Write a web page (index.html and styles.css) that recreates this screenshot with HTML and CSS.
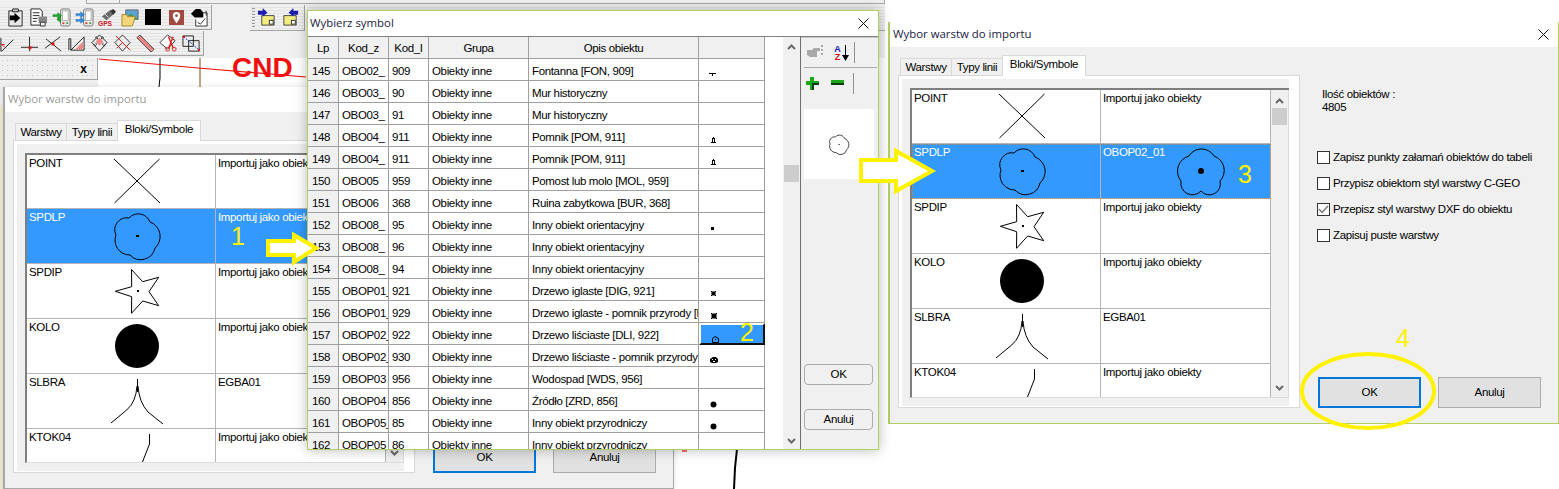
FILE: index.html
```html
<!DOCTYPE html>
<html lang="pl">
<head>
<meta charset="utf-8">
<title>Wybor warstw do importu</title>
<link rel="stylesheet" href="styles.css">
</head>
<body>
<svg class="defs" aria-hidden="true">
  <defs>
    <pattern id="dith" width="2" height="2" patternUnits="userSpaceOnUse"><rect width="2" height="2" fill="#fff"/><rect width="1" height="1" fill="#e6d800"/><rect x="1" y="1" width="1" height="1" fill="#e6d800"/></pattern>
    <pattern id="redh" width="2" height="2" patternUnits="userSpaceOnUse"><rect width="2" height="2" fill="#fff"/><rect width="1" height="1" fill="#e01010"/><rect x="1" y="1" width="1" height="1" fill="#e01010"/></pattern>
    <symbol id="s-cross" viewBox="0 0 70 54"><path d="M12 4 58 48M12.500 48 57.500 4" class="ln"/></symbol>
    <symbol id="s-flower" viewBox="0 0 70 54"><path d="M27 9A12.500 12.500 0 0 1 48 13A15.400 15.400 0 0 1 53 39A14.600 14.600 0 0 1 28 46A14.700 14.700 0 0 1 14 26A12 12 0 0 1 27 9Z" class="ln"/><rect x="34" y="26" width="3" height="2"/></symbol>
    <symbol id="s-flower2" viewBox="0 0 48 48"><path d="M12 8A14.600 14.600 0 0 1 37 8A15.300 15.300 0 0 1 43 33A11 11 0 0 1 24 43A11.600 11.600 0 0 1 4 33A15.700 15.700 0 0 1 12 8Z" class="ln"/><circle cx="24" cy="23" r="3"/></symbol>
    <symbol id="s-star" viewBox="0 0 70 54"><path d="M29.500 5.500 40.700 17.700 56.700 13.300 47 27.700 56.700 41.700 40.700 37 29.500 49.300 29.700 32.700 13.300 27.300 29.700 22.700Z" class="ln"/><rect x="35" y="26" width="2" height="2"/></symbol>
    <symbol id="s-circle" viewBox="0 0 70 54"><circle cx="35" cy="27" r="22"/></symbol>
    <symbol id="s-branch" viewBox="0 0 70 54"><path d="M35.500 5V18M35 12Q34 28 24.700 36L9 49M36 12Q37 28 46 38L61 50" class="ln"/></symbol>
    <symbol id="s-tick" viewBox="0 0 70 54"><path d="M47.500 5V15L40.500 33" class="ln"/></symbol>
    <symbol id="m-fon" viewBox="0 0 12 12"><path d="M1 5.500H8M4.500 5V8" class="ln"/></symbol>
    <symbol id="m-pom" viewBox="0 0 12 12"><path d="M3 8H8V9H3ZM4 4H5V8H4ZM6 4H7V8H6ZM5 3H6V5H5Z"/></symbol>
    <symbol id="m-dot" viewBox="0 0 12 12"><rect x="3" y="5" width="3" height="3"/></symbol>
    <symbol id="m-dig" viewBox="0 0 12 12"><path d="M3 3 8 8M8 3 3 8" class="ln"/><rect x="3.500" y="3.500" width="4" height="4"/></symbol>
    <symbol id="m-dig2" viewBox="0 0 12 12"><path d="M3 3 9 9M9 3 3 9" class="ln"/><rect x="3.500" y="3.500" width="5" height="5"/></symbol>
    <symbol id="m-dli" viewBox="0 0 12 12"><path d="M3.500 5.500 6 3.500 9.500 5.500V9.500H3.500Z" class="ln"/><rect x="6" y="6" width="1" height="1"/></symbol>
    <symbol id="m-dli2" viewBox="0 0 12 12"><path d="M2 5 5 3H8L10 5V8L8 9H4L2 8Z"/><rect x="4" y="5" width="1" height="1" fill="#fff"/><rect x="7" y="5" width="1" height="1" fill="#fff"/><rect x="5" y="7" width="2" height="1" fill="#fff"/></symbol>
    <symbol id="m-ball" viewBox="0 0 12 12"><circle cx="5.500" cy="6.500" r="3"/></symbol>
  </defs>
</svg>

<main class="screen">
  <div class="app">
    <div class="strip"><span class="strip-cell"></span><span class="strip-cell wide"></span></div>
    <div class="app-top">
      <div class="bars">
        <div class="toolbar tb-one">
          <svg class="ic" viewBox="0 0 20 20"><path d="M3 3H17V19H3Z" fill="#e8e8e8" stroke="#222"/><path d="M7 1H13V4H7Z" fill="#ccc" stroke="#222"/><path d="M4 8H9V5L15 10.500 9 16V13H4Z"/></svg>
          <svg class="ic" viewBox="0 0 20 20"><path d="M2 1H12L14 4V18H2Z" fill="#fff" stroke="#222"/><path d="M4 5H11M4 8H11M4 11H9M4 14H8" stroke="#222"/><path d="M10 9H19V16H10Z" fill="#888"/><path d="M12 15H17V19H12Z" fill="#eee" stroke="#333"/></svg>
          <svg class="ic" viewBox="0 0 20 20"><rect x="9" y="1" width="10" height="18" rx="2" fill="#e9e9e9" stroke="#777"/><rect x="11" y="3" width="6" height="10" fill="#fff" stroke="#aaa"/><path d="M11 16H13" stroke="#d33" stroke-width="2"/><path d="M15 16H17" stroke="#3a3" stroke-width="2"/><path d="M1 7H6V5L10 8 6 11V9H1ZM9 11V9L5 12 9 15V13H9Z" fill="#1dab2c" stroke="#0b7a18" stroke-width=".5"/></svg>
          <svg class="ic" viewBox="0 0 20 20"><rect x="9" y="1" width="10" height="18" rx="2" fill="#e9e9e9" stroke="#777"/><rect x="11" y="3" width="6" height="10" fill="#fff" stroke="#aaa"/><path d="M11 16H13" stroke="#d33" stroke-width="2"/><path d="M15 16H17" stroke="#3a3" stroke-width="2"/><path d="M1 6H6V4L10 7 6 10V8H1ZM1 12H6V10L10 13 6 16V14H1Z" fill="#2f8fe0" stroke="#1769b0" stroke-width=".5"/></svg>
          <svg class="ic" viewBox="0 0 20 20"><path d="M4 9 13 2 17 6 9 13Z" fill="#6b6b6b"/><path d="M13 3 16 1 19 4 16 7Z" fill="#333"/><path d="M7 6 11 10" stroke="#ddd"/><text x="0" y="19" class="gps">GPS</text></svg>
          <svg class="ic" viewBox="0 0 20 20"><path d="M5 2H18V12H5Z" fill="#5aa2d0" stroke="#667"/><path d="M5 10 10 6 18 11V12H5Z" fill="#4f9a4a"/><path d="M1 7H6L7 9H15L12 19H1Z" fill="#f1d67c" stroke="#a88a2c"/></svg>
          <span class="sq-black"></span>
          <span class="sq-pin"><svg class="pin" viewBox="0 0 16 16"><path d="M8 2A4 4 0 0 1 12 6C12 9 8 14 8 14C8 14 4 9 4 6A4 4 0 0 1 8 2Z" fill="#fff"/><circle cx="8" cy="6" r="1.500" fill="#a04a40"/></svg></span>
          <svg class="ic" viewBox="0 0 20 20"><path d="M9 5H18V19H6V12" fill="#fff" stroke="#333"/><path d="M1 6 6 1H11L14 5V10H5Z"/><path d="M8 15 11 17 16 11" fill="none" stroke="#333"/><path d="M17 3V8" stroke="#333"/></svg>
        </div>
        <div class="toolbar tb-two">
          <svg class="ic" viewBox="0 0 20 20"><path d="M2 4V18H3L15 6" fill="none" stroke="#222"/><path d="M2 11H6M6 14 3 11" fill="none" stroke="#e01010"/></svg>
          <svg class="ic" viewBox="0 0 20 20"><path d="M0 14H18M9 3V18" fill="none" stroke="#222"/><rect x="8" y="13" width="3" height="3" fill="#e01010"/></svg>
          <svg class="ic" viewBox="0 0 20 20"><path d="M2 5 18 18M17 3 1 15" fill="none" stroke="#222"/><rect x="8" y="9" width="3" height="3" fill="#e01010"/></svg>
          <svg class="ic" viewBox="0 0 20 20"><path d="M2 17V5H4L4 17H18V3L4 17" fill="none" stroke="#222"/><path d="M9 16 17 8V16Z" fill="url(#redh)"/></svg>
          <svg class="ic" viewBox="0 0 20 20"><path d="M10 1 18 9 10 18 2 9Z" fill="none" stroke="#222"/><path d="M6 3 16 13M14 3 4 13" fill="none" stroke="#333" stroke-width="2" stroke-dasharray="1 1"/><path d="M6 8 10 12 14 8 10 4Z" fill="url(#redh)"/></svg>
          <svg class="ic" viewBox="0 0 20 20"><path d="M10 1 18 9 10 18 2 9Z" fill="none" stroke="#333"/><path d="M3 2 18 17M10 9 4 15" fill="none" stroke="#e01010"/></svg>
          <svg class="ic" viewBox="0 0 20 20"><path d="M1 4 4 1 19 16 16 19Z" fill="url(#redh)" stroke="#444"/></svg>
          <svg class="ic" viewBox="0 0 20 20"><path d="M9 1 17 7 9 16 1 9Z" fill="#fff" stroke="#333"/><path d="M10 3 15 15M15 3 10 15" stroke="#d22" stroke-width="1.500"/><circle cx="9" cy="16" r="2" fill="none" stroke="#d22"/><circle cx="16" cy="16" r="2" fill="none" stroke="#d22"/></svg>
          <svg class="ic" viewBox="0 0 20 20"><path d="M1 2H12V13H1ZM7 7H18V18H7Z" fill="none" stroke="#222"/><path d="M2 3 18 17" stroke="#1a2bd8" stroke-dasharray="2 1"/><rect x="1" y="2" width="2" height="2" fill="#e01010"/><rect x="17" y="16" width="2" height="2" fill="#e01010"/></svg>
        </div>
      </div>
      <div class="toolbar tb-three">
        <span class="grip"></span>
        <svg class="ic" viewBox="0 0 20 20"><path d="M5 8H18V18H5Z" fill="url(#dith)" stroke="#444"/><path d="M1 3H6V0L11 5 6 9V7H1Z" fill="#1b1bb0"/><rect x="13" y="13" width="4" height="4" fill="#fff" stroke="#333"/></svg>
        <svg class="ic" viewBox="0 0 20 20"><path d="M3 8H16V18H3Z" fill="url(#dith)" stroke="#444"/><path d="M18 3H13V0L8 5 13 9V7H18Z" fill="#1b1bb0"/><rect x="11" y="13" width="4" height="4" fill="#fff" stroke="#333"/></svg>
      </div>
      <div class="toolbar tb-rest"></div>
    </div>
    <div class="app-main">
      <div class="leftcol">
        <div class="dock"><span class="dock-x">x</span></div>
        <div class="leftcol-gap"></div>
        <div class="leftcol-rest"></div>
      </div>
      <svg class="canvas" viewBox="0 0 787 431">
        <path d="M62 0V20L61 29" class="cad-black"/>
        <path d="M102 0V29" class="cad-brown"/>
        <text x="134" y="19" class="cad-text">CND</text>
        <path d="M1 1 100 10 208 19" class="cad-red"/>
        <path d="M584 393H589" class="cad-red"/>
        <path d="M639 391 637 410 636 431" class="cad-thick"/>
      </svg>
    </div>
  </div>

  <section class="dlg dlg-back">
    <header class="titlebar"><span class="title">Wybor warstw do importu</span><svg class="close" viewBox="0 0 11 11"><path d="M.5.500 10.500 10.500M10.500.500 .5 10.500"/></svg></header>
    <div class="dlg-body">
      <div class="tabs-col">
        <div class="tabstrip"><span class="tab t-a">Warstwy</span><span class="tab t-b">Typy linii</span><span class="tab t-c on">Bloki/Symbole</span></div>
        <div class="tabpanel"><div class="inner">
          <div class="layers">
            <div class="layer-rows">
              <div class="lrow first"><div class="lc1"><span class="ln-name">POINT</span><svg class="sym"><use href="#s-cross"/></svg></div><div class="lc2"><span class="ln-val">Importuj jako obiekty</span></div></div>
              <div class="lrow sel"><div class="lc1"><span class="ln-name">SPDLP</span><svg class="sym"><use href="#s-flower"/></svg></div><div class="lc2"><span class="ln-val">Importuj jako obiekty</span></div></div>
              <div class="lrow"><div class="lc1"><span class="ln-name">SPDIP</span><svg class="sym"><use href="#s-star"/></svg></div><div class="lc2"><span class="ln-val">Importuj jako obiekty</span></div></div>
              <div class="lrow"><div class="lc1"><span class="ln-name">KOLO</span><svg class="sym"><use href="#s-circle"/></svg></div><div class="lc2"><span class="ln-val">Importuj jako obiekty</span></div></div>
              <div class="lrow"><div class="lc1"><span class="ln-name">SLBRA</span><svg class="sym"><use href="#s-branch"/></svg></div><div class="lc2"><span class="ln-val">EGBA01</span></div></div>
              <div class="lrow last"><div class="lc1"><span class="ln-name">KTOK04</span><svg class="sym"><use href="#s-tick"/></svg></div><div class="lc2"><span class="ln-val">Importuj jako obiekty</span></div></div>
            </div>
            <div class="vscroll"><svg class="chev" viewBox="0 0 9 6"><path d="M1 5 4.500 1.500 8 5"/></svg><span class="thumb t-top"></span><svg class="chev down" viewBox="0 0 9 6"><path d="M1 1 4.500 4.500 8 1"/></svg></div>
          </div>
        </div></div>
      </div>
      <div class="side">
        <p class="count">Ilość obiektów :<br>4805</p>
        <div class="check"><span class="box"></span><span>Zapisz punkty załamań obiektów do tabeli</span></div>
        <div class="check"><span class="box"></span><span>Przypisz obiektom styl warstwy C-GEO</span></div>
        <div class="check"><span class="box"><svg class="tickmark" viewBox="0 0 11 11"><path d="M1 5 4 8.500 10 2"/></svg></span><span>Przepisz styl warstwy DXF do obiektu</span></div>
        <div class="check"><span class="box"></span><span>Zapisuj puste warstwy</span></div>
        <div class="btns"><button class="btn primary">OK</button><button class="btn">Anuluj</button></div>
      </div>
    </div>
  </section>

  <section class="dlg dlg-main">
    <header class="titlebar"><span class="title">Wybor warstw do importu</span><svg class="close" viewBox="0 0 11 11"><path d="M.5.500 10.500 10.500M10.500.500 .5 10.500"/></svg></header>
    <div class="dlg-body">
      <div class="tabs-col">
        <div class="tabstrip"><span class="tab t-a">Warstwy</span><span class="tab t-b">Typy linii</span><span class="tab t-c on">Bloki/Symbole</span></div>
        <div class="tabpanel"><div class="inner">
          <div class="layers">
            <div class="layer-rows">
              <div class="lrow first"><div class="lc1"><span class="ln-name">POINT</span><svg class="sym"><use href="#s-cross"/></svg></div><div class="lc2"><span class="ln-val">Importuj jako obiekty</span></div></div>
              <div class="lrow sel focus"><div class="lc1"><span class="ln-name">SPDLP</span><svg class="sym"><use href="#s-flower"/></svg></div><div class="lc2 with-sym"><span class="ln-val">OBOP02_01</span><svg class="sym2"><use href="#s-flower2"/></svg></div></div>
              <div class="lrow"><div class="lc1"><span class="ln-name">SPDIP</span><svg class="sym"><use href="#s-star"/></svg></div><div class="lc2"><span class="ln-val">Importuj jako obiekty</span></div></div>
              <div class="lrow"><div class="lc1"><span class="ln-name">KOLO</span><svg class="sym"><use href="#s-circle"/></svg></div><div class="lc2"><span class="ln-val">Importuj jako obiekty</span></div></div>
              <div class="lrow"><div class="lc1"><span class="ln-name">SLBRA</span><svg class="sym"><use href="#s-branch"/></svg></div><div class="lc2"><span class="ln-val">EGBA01</span></div></div>
              <div class="lrow last"><div class="lc1"><span class="ln-name">KTOK04</span><svg class="sym"><use href="#s-tick"/></svg></div><div class="lc2"><span class="ln-val">Importuj jako obiekty</span></div></div>
            </div>
            <div class="vscroll"><svg class="chev" viewBox="0 0 9 6"><path d="M1 5 4.500 1.500 8 5"/></svg><span class="thumb t-top"></span><svg class="chev down" viewBox="0 0 9 6"><path d="M1 1 4.500 4.500 8 1"/></svg></div>
          </div>
        </div></div>
      </div>
      <div class="side">
        <p class="count">Ilość obiektów :<br>4805</p>
        <div class="check"><span class="box"></span><span>Zapisz punkty załamań obiektów do tabeli</span></div>
        <div class="check"><span class="box"></span><span>Przypisz obiektom styl warstwy C-GEO</span></div>
        <div class="check"><span class="box"><svg class="tickmark" viewBox="0 0 11 11"><path d="M1 5 4 8.500 10 2"/></svg></span><span>Przepisz styl warstwy DXF do obiektu</span></div>
        <div class="check"><span class="box"></span><span>Zapisuj puste warstwy</span></div>
        <div class="btns"><button class="btn primary">OK</button><button class="btn">Anuluj</button></div>
      </div>
    </div>
  </section>

  <section class="dlg-sym">
    <header class="titlebar"><span class="title">Wybierz symbol</span><svg class="close" viewBox="0 0 11 11"><path d="M.5.500 10.500 10.500M10.500.500 .5 10.500"/></svg></header>
    <div class="sym-body">
      <div class="table-area">
        <div class="table">
          <div class="trow head"><span>Lp</span><span>Kod_z</span><span>Kod_I</span><span>Grupa</span><span>Opis obiektu</span><span></span></div>
          <div class="trow"><span>145</span><span>OBO02_</span><span>909</span><span>Obiekty inne</span><span>Fontanna [FON, 909]</span><span><svg class="mini"><use href="#m-fon"/></svg></span></div>
          <div class="trow"><span>146</span><span>OBO03_</span><span>90</span><span>Obiekty inne</span><span>Mur historyczny</span><span></span></div>
          <div class="trow"><span>147</span><span>OBO03_</span><span>91</span><span>Obiekty inne</span><span>Mur historyczny</span><span></span></div>
          <div class="trow"><span>148</span><span>OBO04_</span><span>911</span><span>Obiekty inne</span><span>Pomnik [POM, 911]</span><span><svg class="mini"><use href="#m-pom"/></svg></span></div>
          <div class="trow"><span>149</span><span>OBO04_</span><span>911</span><span>Obiekty inne</span><span>Pomnik [POM, 911]</span><span><svg class="mini"><use href="#m-pom"/></svg></span></div>
          <div class="trow"><span>150</span><span>OBO05</span><span>959</span><span>Obiekty inne</span><span>Pomost lub molo [MOL, 959]</span><span></span></div>
          <div class="trow"><span>151</span><span>OBO06</span><span>368</span><span>Obiekty inne</span><span>Ruina zabytkowa [BUR, 368]</span><span></span></div>
          <div class="trow"><span>152</span><span>OBO08_</span><span>95</span><span>Obiekty inne</span><span>Inny obiekt orientacyjny</span><span><svg class="mini"><use href="#m-dot"/></svg></span></div>
          <div class="trow"><span>153</span><span>OBO08_</span><span>96</span><span>Obiekty inne</span><span>Inny obiekt orientacyjny</span><span></span></div>
          <div class="trow"><span>154</span><span>OBO08_</span><span>94</span><span>Obiekty inne</span><span>Inny obiekt orientacyjny</span><span></span></div>
          <div class="trow"><span>155</span><span>OBOP01_</span><span>921</span><span>Obiekty inne</span><span>Drzewo iglaste [DIG, 921]</span><span><svg class="mini"><use href="#m-dig"/></svg></span></div>
          <div class="trow"><span>156</span><span>OBOP01_</span><span>929</span><span>Obiekty inne</span><span>Drzewo iglaste - pomnik przyrody [DIG, 929]</span><span><svg class="mini"><use href="#m-dig2"/></svg></span></div>
          <div class="trow"><span>157</span><span>OBOP02_</span><span>922</span><span>Obiekty inne</span><span>Drzewo liściaste [DLI, 922]</span><span class="picked"><svg class="mini"><use href="#m-dli"/></svg></span></div>
          <div class="trow"><span>158</span><span>OBOP02_</span><span>930</span><span>Obiekty inne</span><span>Drzewo liściaste - pomnik przyrody</span><span><svg class="mini"><use href="#m-dli2"/></svg></span></div>
          <div class="trow"><span>159</span><span>OBOP03</span><span>956</span><span>Obiekty inne</span><span>Wodospad [WDS, 956]</span><span></span></div>
          <div class="trow"><span>160</span><span>OBOP04</span><span>856</span><span>Obiekty inne</span><span>Źródło [ZRD, 856]</span><span><svg class="mini"><use href="#m-ball"/></svg></span></div>
          <div class="trow"><span>161</span><span>OBOP05_</span><span>85</span><span>Obiekty inne</span><span>Inny obiekt przyrodniczy</span><span><svg class="mini"><use href="#m-ball"/></svg></span></div>
          <div class="trow"><span>162</span><span>OBOP05</span><span>86</span><span>Obiekty inne</span><span>Inny obiekt przyrodniczy</span><span></span></div>
        </div>
        <div class="vscroll vs-sym"><svg class="chev" viewBox="0 0 9 6"><path d="M1 5 4.500 1.500 8 5"/></svg><span class="thumb t-mid"></span><svg class="chev down" viewBox="0 0 9 6"><path d="M1 1 4.500 4.500 8 1"/></svg></div>
      </div>
      <aside class="sym-side">
        <div class="toolrow">
          <svg class="ti" viewBox="0 0 18 16"><path d="M1 5H6L8 3H14V6H11V12H4L1 10Z" fill="#a9a9a9"/><path d="M16 0V2M16 4V6M16 8V10" stroke="#aaa" stroke-width="2"/></svg>
          <span class="az"><span class="az-a">A</span><span class="az-z">Z</span></span>
          <svg class="az-arrow" viewBox="0 0 7 16"><path d="M3.500 0V12" stroke="#000"/><path d="M0 10H7L3.500 16Z"/></svg>
          <span class="vsep"></span>
        </div>
        <div class="toolrow second">
          <svg class="ti-small" viewBox="0 0 13 13"><path d="M4 0H8V4H13V8H8V13H4V8H0V4H4Z" fill="#18a818"/><path d="M13 8H8V13H6V6H13Z" fill="#0a3d0a"/></svg>
          <svg class="ti-small" viewBox="0 0 13 13"><rect y="3" width="13" height="3" fill="#18a818"/><rect y="6" width="13" height="2" fill="#0a3d0a"/></svg>
          <span class="vsep"></span>
        </div>
        <div class="preview"><svg class="preview-sym" viewBox="0 0 70 54"><path d="M27 9A12.500 12.500 0 0 1 48 13A15.400 15.400 0 0 1 53 39A14.600 14.600 0 0 1 28 46A14.700 14.700 0 0 1 14 26A12 12 0 0 1 27 9Z" class="ln3"/><rect x="34" y="26" width="2.500" height="2.500"/></svg></div>
        <button class="rbtn ok">OK</button>
        <button class="rbtn">Anuluj</button>
      </aside>
    </div>
  </section>

  <svg class="overlay ov-one" viewBox="0 0 60 36"><path d="M5 10H31V4L53 17 31 31V24H5Z" class="mark"/></svg>
  <svg class="overlay ov-three" viewBox="0 0 80 52"><path d="M3 14H38V5L74 25 38 45V35H3Z" class="mark"/></svg>
  <svg class="overlay ov-ring" viewBox="0 0 140 82"><ellipse cx="70" cy="41" rx="66" ry="37" class="ring"/></svg>
  <span class="num n1">1</span>
  <span class="num n2">2</span>
  <span class="num n3">3</span>
  <span class="num n4">4</span>
</main>
</body>
</html>
```
FILE: styles.css
```css
* { box-sizing: border-box; }
html, body { margin: 0; padding: 0; background: #fff; }
body {
  font-family: "Liberation Sans", Arial, sans-serif;
  font-size: 11.500px;
  letter-spacing: -.35px;
  line-height: 13px;
  color: #000;
}
.defs { position: absolute; width: 0; height: 0; }
.ln { fill: none; stroke: #000; stroke-width: 1; }
.ln2 { fill: none; stroke: #000; stroke-width: 2; }
.ln3 { fill: none; stroke: #000; stroke-width: 1.700; }

.screen { position: relative; width: 1559px; height: 489px; overflow: hidden; background: #fff; }

/* background application */
.app { position: absolute; left: 0; top: 0; width: 885px; height: 489px; display: flex; flex-direction: column; overflow: hidden; }
.strip { height: 5px; background: #f0f0f0; display: flex; padding-left: 86px; flex: none; }
.strip-cell { width: 34px; height: 4px; border-right: 1px solid #a8a8a8; border-left: 1px solid #a8a8a8; border-bottom: 1px solid #a8a8a8; }
.strip-cell.wide { flex: 1; border-left: 0; }
.app-top { height: 53px; flex: none; background: #f0f0f0; display: flex; align-items: flex-start; }
.bars { width: 250px; display: flex; flex-direction: column; gap: 1px; flex: none; }
.toolbar {
  display: flex; align-items: center;
  background: repeating-linear-gradient(to bottom, #f0f0f0 0, #f0f0f0 2px, #e3e3e3 2px, #e3e3e3 3px);
  border-bottom: 1px solid #a4a4a4;
  border-right: 1px solid #a4a4a4;
}
.tb-one { width: 212px; height: 25px; padding-left: 5.500px; gap: 4px; }
.tb-two { width: 204px; height: 25px; padding-left: 0; gap: 3.900px; }
.tb-two .ic:first-child { margin-left: -1.500px; }
.tb-three { width: 55px; height: 26px; padding-left: 2px; gap: 5px; }
.tb-rest { flex: 1; height: 26px; margin-left: 3px; border-right: 0; }
.ic { width: 19px; height: 19px; flex: none; display: block; }
.gps { font: bold 7px "Liberation Sans", sans-serif; fill: #d01818; letter-spacing: 0; }
.sq-black { width: 16px; height: 16px; background: #000; flex: none; margin: 0 1.500px; }
.sq-pin { width: 15px; height: 15px; background: #a04a40; flex: none; margin: 0 2px; display: flex; }
.pin { width: 15px; height: 15px; }
.grip { width: 3px; height: 20px; margin-right: -3.500px; background: repeating-linear-gradient(to bottom, #999 0, #999 1px, transparent 1px, transparent 3px); flex: none; }

.app-main { flex: 1; display: flex; min-height: 0; }
.leftcol { width: 98px; flex: none; display: flex; flex-direction: column; }
.dock {
  height: 22px; flex: none; display: flex; justify-content: flex-end; align-items: center; padding-right: 8px;
  background-color: #f0f0f0;
  background-image: radial-gradient(#c4c4c4 .6px, transparent .8px);
  background-size: 5px 5px;
  border-right: 1px solid #a4a4a4; border-bottom: 1px solid #a4a4a4;
}
.dock-x { font: bold 12px/12px "Liberation Sans", sans-serif; letter-spacing: 0; background: #f0f0f0; padding: 0 2px; }
.leftcol-gap { height: 25px; background: #f0f0f0; flex: none; }
.leftcol-rest { flex: 1; background: #ecebd2; }
.canvas { width: 787px; height: 431px; display: block; flex: none; background: #fff; }
.cad-red { fill: none; stroke: #f01010; stroke-width: 1.200; }
.cad-black { fill: none; stroke: #000; stroke-width: 1; }
.cad-brown { fill: none; stroke: #8a4a10; stroke-width: 1; }
.cad-thick { fill: none; stroke: #000; stroke-width: 2; }
.cad-text { font: bold 28px "Liberation Sans", sans-serif; letter-spacing: 0; fill: #f01010; }

/* import dialogs */
.dlg {
  position: absolute; width: 671px; height: 402px; display: flex; flex-direction: column;
  background: #f0f0f0;
}
.dlg-back { left: 3px; top: 87px; border: solid #a8a8a8; border-width: 0 1px 1px 2px; box-shadow: 0 0 6px rgba(0,0,0,.12); }
.dlg-back .title { color: #9a9a9a; }
.dlg-main { left: 888px; top: 22px; border: solid #b3cf63; border-width: 0 1px 1px 2px; }
.titlebar {
  height: 25px; flex: none; background: #fff; display: flex; align-items: center; justify-content: space-between;
  padding: 0 9px 1px 3px;
}
.title { font: 11.400px/14px "Open Sans", "Liberation Sans", sans-serif; letter-spacing: 0; color: #1a1a40; }
.close { width: 11px; height: 11px; display: block; flex: none; }
.close path { fill: none; stroke: #111; stroke-width: 1; }
.dlg-body { flex: 1; display: flex; min-height: 0; }
.tabs-col { width: 402px; margin-left: 8px; flex: none; padding-top: 8px; }
.tabstrip { height: 20px; padding-left: 2px; display: flex; align-items: flex-end; position: relative; z-index: 1; }
.tab { height: 17px; border: 1px solid #d9d9d9; border-bottom: 0; background: #f0f0f0; padding-top: 2px; text-align: center; margin-right: -1px; }
.t-a { width: 52px; }
.t-b { width: 52px; }
.tab.on { height: 21px; background: #fff; width: 84px; margin-bottom: -1px; padding-top: 2px; }
.tabpanel { height: 333px; border: 1px solid #d9d9d9; background: #fff; padding: 3px 10px 1px 3px; }
.inner { height: 327px; background: #f0f0f0; padding: 9px 0 0 8px; }
.layers { width: 379px; height: 310px; display: flex; border-left: 2px solid #7f7f7f; border-top: 2px solid #7f7f7f; border-bottom: 1px solid #dcdcdc; background: #fff; }
.layer-rows { width: 359px; flex: none; overflow: hidden; }
.lrow { display: grid; grid-template-columns: 189px 170px; height: 55px; }
.lrow.first { height: 54px; }
.lrow.last { height: 34px; overflow: hidden; }
.lc1, .lc2 { border-right: 1px solid #b4b4b4; border-bottom: 1px solid #b4b4b4; display: flex; padding-left: 2px; overflow: hidden; }
.lrow.last .lc1, .lrow.last .lc2 { border-bottom: 0; }
.ln-name { width: 73px; flex: none; padding-top: 2px; }
.ln-val { padding-top: 2px; white-space: nowrap; }
.lc2.with-sym .ln-val { width: 74px; flex: none; }
.sym { width: 70px; height: 54px; flex: none; display: block; }
.sym2 { width: 48px; height: 48px; flex: none; display: block; margin-top: 4px; }
.lrow.sel { background: #3399ff; color: #fff; }
.lrow.focus { outline: 1px dotted #c08a55; outline-offset: -1px; }

.vscroll { width: 18px; flex: none; background: #f0f0f0; display: flex; flex-direction: column; align-items: center; padding: 8px 0 6px; border-right: 1px solid #dcdcdc; }
.chev { width: 9px; height: 6px; display: block; flex: none; }
.chev path { fill: none; stroke: #6a6a6a; stroke-width: 2; }
.chev.down { margin-top: auto; }
.thumb { width: 15px; background: #cdcdcd; flex: none; }
.t-top { height: 17px; margin-top: 4px; }

.side { flex: 1; display: flex; flex-direction: column; padding: 41px 17px 15px 17px; }
.count { margin: 0 0 37px 5px; }
.check { display: flex; align-items: center; gap: 3px; height: 13px; margin-bottom: 13px; white-space: nowrap; }
.box { width: 13px; height: 13px; background: #fff; border: 1px solid #333; flex: none; display: flex; }
.tickmark { width: 11px; height: 11px; }
.tickmark path { fill: none; stroke: #777; stroke-width: 1.400; }
.btns { margin-top: auto; margin-left: 1px; display: flex; gap: 17px; }
.btn { width: 103px; height: 31px; flex: none; font: inherit; letter-spacing: inherit; color: #000; background: #e1e1e1; border: 1px solid #adadad; border-radius: 0; padding: 0; }
.btn.primary { border: 2px solid #0078d7; }

/* symbol picker */
.dlg-sym {
  position: absolute; left: 307px; top: 10px; width: 572px; height: 440px;
  border: 1px solid #b3cf63; display: flex; flex-direction: column; background: #f0f0f0;
  box-shadow: 0 0 12px rgba(0,0,0,.28);
}
.dlg-sym .titlebar { padding: 0 9px 1px 2px; }
.sym-body { flex: 1; display: flex; min-height: 0; border-top: 1px solid #808080; }
.table-area { width: 493px; flex: none; display: flex; background: #fff; border-right: 1px solid #6e6e6e; overflow: hidden; }
.table { width: 475px; flex: none; overflow: hidden; }
.trow { display: grid; grid-template-columns: 31px 50px 40px 100px 170px 66px; height: 22px; width: 457px; }
.trow > span { border-right: 1px solid #a0a0a0; border-bottom: 1px solid #a0a0a0; padding: 6px 0 0 3px; white-space: nowrap; overflow: hidden; display: block; }
.trow > span:first-child { background: #f0f0f0; padding-left: 4px; }
.trow.head > span { background: #f0f0f0; text-align: center; padding: 5px 0 0; }
.mini { width: 12px; height: 12px; display: block; margin: 3px 0 0 6px; }
.trow > .picked { background: #3399ff; border: 2px solid #fff; border-right: 2px solid #111; border-bottom: 2px solid #111; padding-top: 5px; padding-left: 2px; }
.vs-sym { width: 17px; padding: 7px 0 5px; border-right: 0; }
.t-mid { height: 17px; margin-top: 115px; width: 15px; }
.sym-side { flex: 1; display: flex; flex-direction: column; align-items: flex-start; padding-left: 3px; border-top: 1px solid #c8c8c8; margin-top: 0; }
.toolrow { width: 73px; height: 30px; display: flex; align-items: center; gap: 4px; border-bottom: 1px solid #a8a8a8; padding-left: 2px; flex: none; }
.toolrow.second { border-bottom: 0; height: 30px; gap: 12px; padding-left: 2px; }
.ti { width: 18px; height: 16px; display: block; flex: none; }
.ti-small { width: 13px; height: 13px; display: block; flex: none; }
.az { display: flex; flex-direction: column; width: 9px; margin-left: 5px; margin-right: -4px; font: bold 9px/8px "Liberation Sans", sans-serif; letter-spacing: 0; text-align: center; flex: none; }
.az-a { color: #1a1ad0; }
.az-z { color: #d01010; }
.az-arrow { width: 7px; height: 16px; flex: none; }
.vsep { width: 1px; height: 21px; background: #909090; flex: none; }
.toolrow .vsep { margin-left: 1px; }
.toolrow.second .vsep { margin-left: -3px; }
.preview { width: 70px; height: 70px; background: #fff; margin-top: 11px; flex: none; display: flex; align-items: center; justify-content: center; }
.preview-sym { width: 30px; height: 23px; display: block; }
.rbtn { width: 69px; height: 21px; font: inherit; letter-spacing: inherit; color: #000; background: #f0f0f0; border: 1px solid #adadad; border-radius: 4px; padding: 0; flex: none; }
.rbtn.ok { margin-top: auto; margin-bottom: 24px; }
.rbtn:last-child { margin-bottom: 19px; }

/* annotations */
.overlay { position: absolute; display: block; overflow: visible; }
.mark { fill: #fff; stroke: #fff200; stroke-width: 4; }
.ring { fill: none; stroke: #fff200; stroke-width: 4; }
.ov-one { left: 263px; top: 231px; width: 60px; height: 36px; }
.ov-three { left: 858px; top: 146px; width: 80px; height: 52px; }
.ov-ring { left: 1298px; top: 350px; width: 140px; height: 82px; }
.num { position: absolute; font: 25px/25px "Liberation Sans", sans-serif; letter-spacing: 0; color: #fff200; }
.n1 { left: 231px; top: 224px; }
.n2 { left: 740px; top: 320px; }
.n3 { left: 1238px; top: 162px; }
.n4 { left: 1396px; top: 326px; }
```
